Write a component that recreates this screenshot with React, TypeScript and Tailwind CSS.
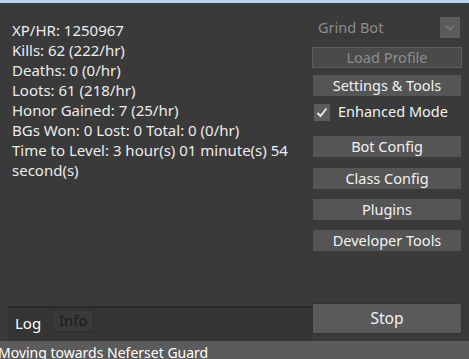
import React from 'react';

const stats = [
  'XP/HR: 1250967',
  'Kills: 62 (222/hr)',
  'Deaths: 0 (0/hr)',
  'Loots: 61 (218/hr)',
  'Honor Gained: 7 (25/hr)',
  'BGs Won: 0 Lost: 0 Total: 0 (0/hr)',
  'Time to Level: 3 hour(s) 01 minute(s) 54 second(s)',
];

const Btn: React.FC<{ label: string; className?: string }> = ({ label, className = '' }) => (
  <button className={`w-[148px] h-[21px] ml-px bg-[#555555] text-[#f2f2f2] text-[14.5px] leading-[21px] text-center ${className}`}>
    {label}
  </button>
);

const App: React.FC = () => {
  return (
    <div className="w-[469px] h-[359px] overflow-hidden bg-[#3a3a3a] flex flex-col font-['Noto_Sans',sans-serif]">
      <div className="h-[3px] bg-[#bcd3ea] shrink-0" />
      <div className="flex flex-1 min-h-0">
        {/* left: stats + log */}
        <div className="w-[312px] flex flex-col">
          <div className="pl-3 pt-[17px] text-[15px] leading-[20px] text-[#ececec]">
            {stats.map((s) => (
              <div key={s}>{s}</div>
            ))}
          </div>
          <div className="flex-1" />
          <div className="ml-2 h-[35px] border-t-2 border-[#292929] bg-[#353535] flex items-start">
            <div className="w-[44px] h-[31px] text-[15px] leading-[31px] text-white pl-[7px]">Log</div>
            <div className="w-[42px] h-[23px] mt-[1px] bg-[#393939] border border-[#2e2e2e] text-[15px] leading-[21px] text-[#1c1c1c] pl-[6px]">
              Info
            </div>
          </div>
        </div>

        {/* right: controls */}
        <div className="w-[150px] flex flex-col pt-[14px]">
          <div className="flex items-center h-[21px] pl-[6px]">
            <span className="flex-1 text-[14.5px] text-[#8c8c8c]">Grind Bot</span>
            <div className="w-[20px] h-[21px] bg-[#5b5b5b] mr-[2px] flex items-center justify-center">
              <svg width="10" height="7" viewBox="0 0 10 7">
                <path d="M1 1.5 L5 5.5 L9 1.5" stroke="#757575" strokeWidth="2" fill="none" />
              </svg>
            </div>
          </div>
          <button className="mt-[9px] w-[150px] h-[21px] bg-[#4a4a4a] border border-[#5e5e5e] text-[#8e8e8e] text-[14.5px] leading-[19px] text-center">
            Load Profile
          </button>
          <Btn label="Settings & Tools" className="mt-[7px] h-[20px] leading-[20px]" />
          <div className="mt-[7px] h-[18px] flex items-center pl-[2px]">
            <div className="w-[16px] h-[17px] bg-[#5c5c5c] flex items-center justify-center">
              <svg width="12" height="11" viewBox="0 0 12 11">
                <path d="M1.5 6 L4.5 9 L10.5 1.5" stroke="#e8e8e8" strokeWidth="2" fill="none" />
              </svg>
            </div>
            <span className="ml-[8px] text-[14.5px] text-[#f2f2f2]">Enhanced Mode</span>
          </div>
          <Btn label="Bot Config" className="mt-[15px] h-[20px] leading-[20px]" />
          <Btn label="Class Config" className="mt-[11px]" />
          <Btn label="Plugins" className="mt-[10px]" />
          <Btn label="Developer Tools" className="mt-[10px]" />
          <div className="flex-1" />
          <button className="w-[148px] h-[29px] ml-px mb-[8px] bg-[#5a5a5a] shadow-[0_0_0_1px_#333] text-[15.5px] text-[#f2f2f2] text-center">
            Stop
          </button>
        </div>
      </div>
      <div className="h-[18px] shrink-0 bg-[#5b5b5b] text-[14px] leading-[24px] text-white whitespace-nowrap -indent-[2px]">
        Moving towards Neferset Guard
      </div>
    </div>
  );
};

export default App;
